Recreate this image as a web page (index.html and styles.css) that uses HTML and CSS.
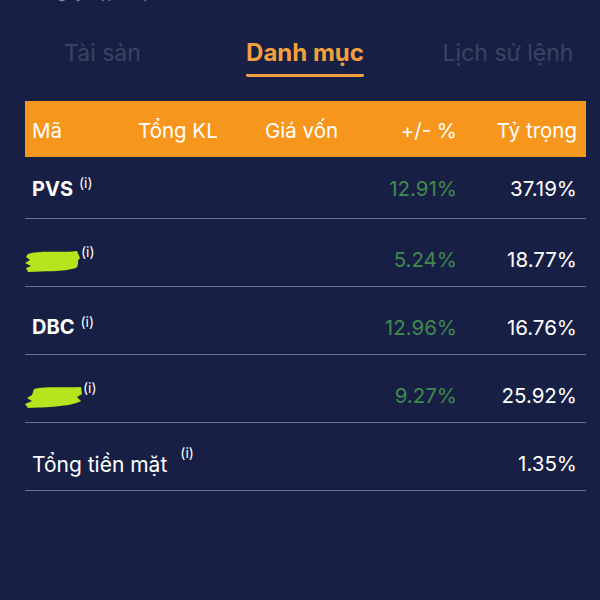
FILE: index.html
```html
<!DOCTYPE html>
<html lang="vi">
<head>
	<meta charset="UTF-8">
	<title>Danh mục</title>
	<link rel="stylesheet" href="styles.css">
</head>
<body>
	<div class="updated">Ngày cập nhật: 15/09/2023</div>

	<div class="tabs">
		<span class="tab">Tài sản</span>
		<span class="tab on">Danh mục</span>
		<span class="tab">Lịch sử lệnh</span>
	</div>

	<div class="grid">
		<div class="head">
			<span>Mã</span>
			<span>Tổng KL</span>
			<span>Giá vốn</span>
			<span class="r">+/- %</span>
			<span class="r">Tỷ trọng</span>
		</div>

		<div class="row">
			<span class="code">PVS<sup>(i)</sup></span>
			<span></span>
			<span></span>
			<span class="r up">12.91%</span>
			<span class="r">37.19%</span>
		</div>
		<div class="row">
			<span class="code">
				<svg class="mask" width="56" height="24" viewBox="0 0 56 24"><path d="M3 5 C14 1 32 4 52 2 L55 9 C51 12 55 15 51 19 C38 23 20 22 3 23 L1 19 L6 17 L0 14 L5 11 L1 8 Z" fill="#b5e51d"/></svg><sup>(i)</sup>
			</span>
			<span></span>
			<span></span>
			<span class="r up">5.24%</span>
			<span class="r">18.77%</span>
		</div>
		<div class="row">
			<span class="code">DBC<sup>(i)</sup></span>
			<span></span>
			<span></span>
			<span class="r up">12.96%</span>
			<span class="r">16.76%</span>
		</div>
		<div class="row">
			<span class="code">
				<svg class="mask" width="58" height="24" viewBox="0 0 58 24"><path d="M9 4 C22 1 42 3 56 2 L57 9 L52 12 L56 16 C46 21 30 22 3 23 L0 19 L7 16 L2 13 L7 10 Z" fill="#b5e51d"/></svg><sup>(i)</sup>
			</span>
			<span></span>
			<span></span>
			<span class="r up">9.27%</span>
			<span class="r">25.92%</span>
		</div>
		<div class="row">
			<span class="cash">Tổng tiền mặt<sup>(i)</sup></span>
			<span></span>
			<span></span>
			<span></span>
			<span class="r">1.35%</span>
		</div>
	</div>
</body>
</html>
```

FILE: styles.css
```css
*{
	margin:0;
	padding:0;
	box-sizing:border-box;
}
body{
	background:#172044;
	color:#fff;
	font-family:Inter, Roboto, "Liberation Sans", sans-serif;
	padding:0 14px 0 25px;
}
.updated{
	margin-top:-18px;
	margin-left:20px;
	height:20px;
	font-size:16px;
	line-height:20px;
	color:#7d84a0;
}
.tabs{
	display:grid;
	grid-template-columns:155px 250px 156px;
	margin-top:22px;
	height:77px;
	align-items:start;
}
.tab{
	justify-self:center;
	font-size:23px;
	line-height:34px;
	padding-top:12px;
	color:#3b4363;
}
.tab.on{
	color:#f2a03d;
	font-weight:bold;
	font-size:24px;
	padding-bottom:4px;
	border-bottom:3px solid #f2a03d;
	border-radius:0 0 2px 2px;
}
.grid{
	width:561px;
}
.head, .row{
	display:grid;
	grid-template-columns:106px 127px 100px 92px 120px;
	padding:0 9px 0 7px;
	align-items:center;
}
.head{
	background:#f7961c;
	height:56px;
	font-size:20.5px;
	padding-top:2px;
}
.row{
	height:68px;
	padding-top:13px;
	border-bottom:1.5px solid #66708f;
	font-size:20.5px;
}
.row:nth-child(2){
	height:62px;
	padding-top:2px;
}
.r{
	text-align:right;
}
.up{
	color:#3f8a4d;
}
.code{
	font-weight:bold;
	font-size:20px;
	display:flex;
	align-items:center;
	white-space:nowrap;
}
.code sup, .cash sup{
	font-weight:normal;
	font-size:14px;
	margin-left:6px;
	position:relative;
	top:-6px;
}
.mask{
	margin-left:-7px;
	margin-top:4px;
}
.mask + sup{
	margin-left:0;
	top:-8px;
}
.cash{
	white-space:nowrap;
	font-size:21px;
}
.cash sup{
	margin-left:13px;
}
```
